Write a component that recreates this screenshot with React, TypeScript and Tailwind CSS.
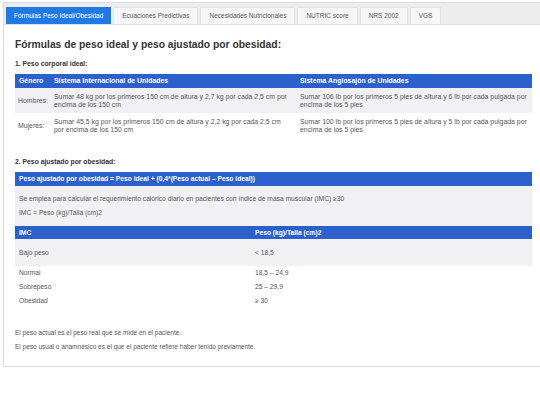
import React from 'react';

const tabs = [
  'Fórmulas Peso Ideal/Obesidad',
  'Ecuaciones Predictivas',
  'Necesidades Nutricionales',
  'NUTRIC score',
  'NRS 2002',
  'VGS',
];

const imcRows = [
  ['Normal', '18,5 – 24,9'],
  ['Sobrepeso', '25 – 29,9'],
  ['Obesidad', '≥ 30'],
];

export default function App() {
  return (
    <div className="w-[540px] h-[405px] overflow-hidden bg-white pt-[2px] pl-[3px] font-['Liberation_Sans',Arial,sans-serif]">
      <div className="w-[560px] h-[365px] border border-[#dcdcdc]">
        {/* tabs */}
        <div className="h-[22px] bg-[#ededed] border-b border-[#e2e2e2] flex items-end gap-[2px] pl-[2px]">
          {tabs.map((t, i) => (
            <div
              key={t}
              className={
                i === 0
                  ? 'h-[17px] px-[8px] flex items-center text-[6.5px] bg-[#1f7ae6] text-white'
                  : 'h-[17px] px-[8px] flex items-center text-[6.5px] bg-[#f6f6f6] text-[#555] border-t border-x border-[#e0e0e0]'
              }
            >
              {t}
            </div>
          ))}
        </div>

        <div className="w-[517px] ml-[11px] text-[#555]">
          <h1 className="mt-[13px] text-[10.3px] leading-[14px] font-bold text-[#333]">
            Fórmulas de peso ideal y peso ajustado por obesidad:
          </h1>
          <h2 className="mt-[7px] text-[6.8px] leading-[10px] font-bold text-[#333]">1. Peso corporal ideal:</h2>

          <table className="mt-[5px] w-full border-collapse text-[6.9px] leading-[8px]">
            <thead>
              <tr className="bg-[#2c60cc] text-white font-bold h-[14px]">
                <th className="w-[35px] text-left pl-[4px] font-bold">Género</th>
                <th className="w-[247px] text-left pl-[4px] font-bold">Sistema Internacional de Unidades</th>
                <th className="text-left pl-[3px] font-bold">Sistema Anglosajón de Unidades</th>
              </tr>
            </thead>
            <tbody>
              <tr className="bg-[#f1f0f3] h-[25px]">
                <td className="pl-[3px]">Hombres:</td>
                <td className="pl-[4px] pr-[8px]">
                  Sumar 48 kg por los primeros 150 cm de altura y 2,7 kg por cada 2,5 cm por encima de los 150 cm
                </td>
                <td className="pl-[3px] pr-[2px]">
                  Sumar 106 lb por los primeros 5 pies de altura y 6 lb por cada pulgada por encima de los 5 pies
                </td>
              </tr>
              <tr className="h-[25px]">
                <td className="pl-[3px]">Mujeres:</td>
                <td className="pl-[4px] pr-[8px]">
                  Sumar 45,5 kg por los primeros 150 cm de altura y 2,2 kg por cada 2,5 cm por encima de los 150 cm
                </td>
                <td className="pl-[3px] pr-[2px]">
                  Sumar 100 lb por los primeros 5 pies de altura y 5 lb por cada pulgada por encima de los 5 pies
                </td>
              </tr>
            </tbody>
          </table>

          <h2 className="mt-[19px] text-[6.8px] leading-[10px] font-bold text-[#333]">2. Peso ajustado por obesidad:</h2>

          <div className="mt-[5px] h-[14px] bg-[#2c60cc] text-white font-bold text-[6.7px] flex items-center pl-[4px]">
            Peso ajustado por obesidad = Peso ideal + (0,4*(Peso actual – Peso ideal))
          </div>
          <div className="bg-[#f1f0f3] pt-[9px] pb-[9px] px-[4px] text-[6.7px] leading-[8px] flex flex-col gap-[6px]">
            <p>Se emplea para calcular el requerimiento calórico diario en pacientes con índice de masa muscular (IMC) ≥30</p>
            <p>IMC = Peso (kg)/Talla (cm)2</p>
          </div>

          <table className="w-full border-collapse text-[6.7px] leading-[8px]">
            <thead>
              <tr className="bg-[#2c60cc] text-white h-[13px]">
                <th className="w-[240px] text-left pl-[4px] font-bold">IMC</th>
                <th className="text-left pl-[0px] font-bold">Peso (kg)/Talla (cm)2</th>
              </tr>
            </thead>
            <tbody>
              <tr className="bg-[#f1f0f3] h-[27px]">
                <td className="pl-[4px]">Bajo peso</td>
                <td>&lt; 18,5</td>
              </tr>
              {imcRows.map(([a, b]) => (
                <tr key={a} className="h-[14px]">
                  <td className="pl-[4px]">{a}</td>
                  <td>{b}</td>
                </tr>
              ))}
            </tbody>
          </table>

          <p className="mt-[21px] text-[6.5px] leading-[8px]">El peso actual es el peso real que se mide en el paciente.</p>
          <p className="mt-[6px] text-[6.5px] leading-[8px]">El peso usual o anamnésico es el que el paciente refiere haber tenido previamente.</p>
        </div>
      </div>
    </div>
  );
}
